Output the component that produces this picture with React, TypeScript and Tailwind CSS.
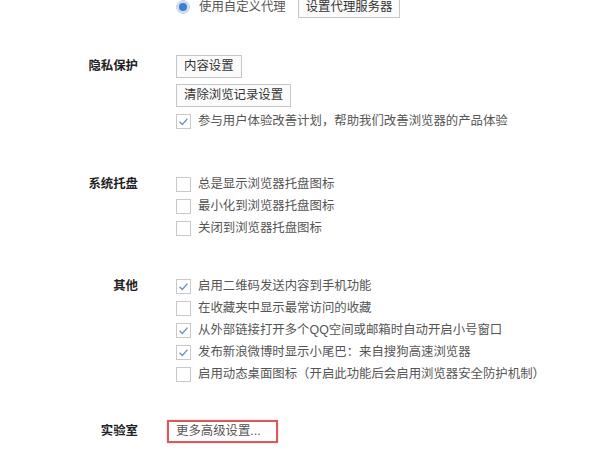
import React from 'react';

const FONT = { fontFamily: '"Liberation Sans", "Noto Sans CJK SC", sans-serif' };

const Check = ({ checked }: { checked?: boolean }) => (
  <span className="w-[15px] h-[15px] border border-[#c9c9c9] bg-white flex items-center justify-center shrink-0">
    {checked && (
      <svg width="11" height="11" viewBox="0 0 11 11">
        <path d="M1.5 5.8 L4.3 8.4 L9.5 2.6" fill="none" stroke="#6f93bb" strokeWidth="1.4" />
      </svg>
    )}
  </span>
);

const Row = ({ checked, text }: { checked?: boolean; text: string }) => (
  <div className="h-[22px] flex items-center gap-[7px]">
    <Check checked={checked} />
    <span className="text-[#555] whitespace-nowrap">{text}</span>
  </div>
);

const Btn = ({ children }: { children: React.ReactNode }) => (
  <button className="h-[23px] px-[7px] border border-[#c6c6c6] bg-[#fbfbfb] text-[#333] whitespace-nowrap leading-none">
    {children}
  </button>
);

const Label = ({ text, h = 22 }: { text: string; h?: number }) => (
  <div
    className={
      'flex items-center justify-end font-bold text-[#222] ' + (h === 23 ? 'h-[23px]' : 'h-[22px]')
    }
  >
    {text}
  </div>
);

export default function App() {
  return (
    <div className="w-[615px] h-[454px] bg-white overflow-hidden text-[12.4px]" style={FONT}>
      <div className="grid grid-cols-[138px_1fr] gap-x-[38px]">
        {/* proxy row (cut off at top) */}
        <div />
        <div className="-mt-[4px] h-[22px] flex items-center">
          <span className="w-[14px] h-[14px] rounded-full border border-[#cfcfcf] bg-white flex items-center justify-center shrink-0">
            <span className="w-[8px] h-[8px] rounded-full bg-[#3d7fd6] ring-2 ring-[#c7dcf5]" />
          </span>
          <span className="ml-[9px] text-[#555] whitespace-nowrap">使用自定义代理</span>
          <span className="ml-[12px]">
            <button className="h-[22px] px-[7px] border border-[#c6c6c6] bg-[#fbfbfb] text-[#333] whitespace-nowrap leading-none">
              设置代理服务器
            </button>
          </span>
        </div>

        {/* 隐私保护 */}
        <div className="mt-[37px]">
          <Label text="隐私保护" h={23} />
        </div>
        <div className="mt-[37px] flex flex-col items-start">
          <Btn>内容设置</Btn>
          <div className="mt-[6px]">
            <Btn>清除浏览记录设置</Btn>
          </div>
          <div className="mt-[3px]">
            <Row checked text="参与用户体验改善计划，帮助我们改善浏览器的产品体验" />
          </div>
        </div>

        {/* 系统托盘 */}
        <div className="mt-[41px]">
          <Label text="系统托盘" />
        </div>
        <div className="mt-[41px]">
          <Row text="总是显示浏览器托盘图标" />
          <Row text="最小化到浏览器托盘图标" />
          <Row text="关闭到浏览器托盘图标" />
        </div>

        {/* 其他 */}
        <div className="mt-[36px]">
          <Label text="其他" />
        </div>
        <div className="mt-[36px]">
          <Row checked text="启用二维码发送内容到手机功能" />
          <Row text="在收藏夹中显示最常访问的收藏" />
          <Row checked text="从外部链接打开多个QQ空间或邮箱时自动开启小号窗口" />
          <Row checked text="发布新浪微博时显示小尾巴：来自搜狗高速浏览器" />
          <Row text="启用动态桌面图标（开启此功能后会启用浏览器安全防护机制）" />
        </div>

        {/* 实验室 */}
        <div className="mt-[35px]">
          <Label text="实验室" h={23} />
        </div>
        <div className="mt-[35px]">
          <div className="-ml-[9px] w-[111px] h-[23px] border-2 border-[#d9595c] shadow-[0_0_2px_#f3b6b8] flex items-center pl-[7px] text-[#555] whitespace-nowrap">
            更多高级设置...
          </div>
        </div>
      </div>
    </div>
  );
}
